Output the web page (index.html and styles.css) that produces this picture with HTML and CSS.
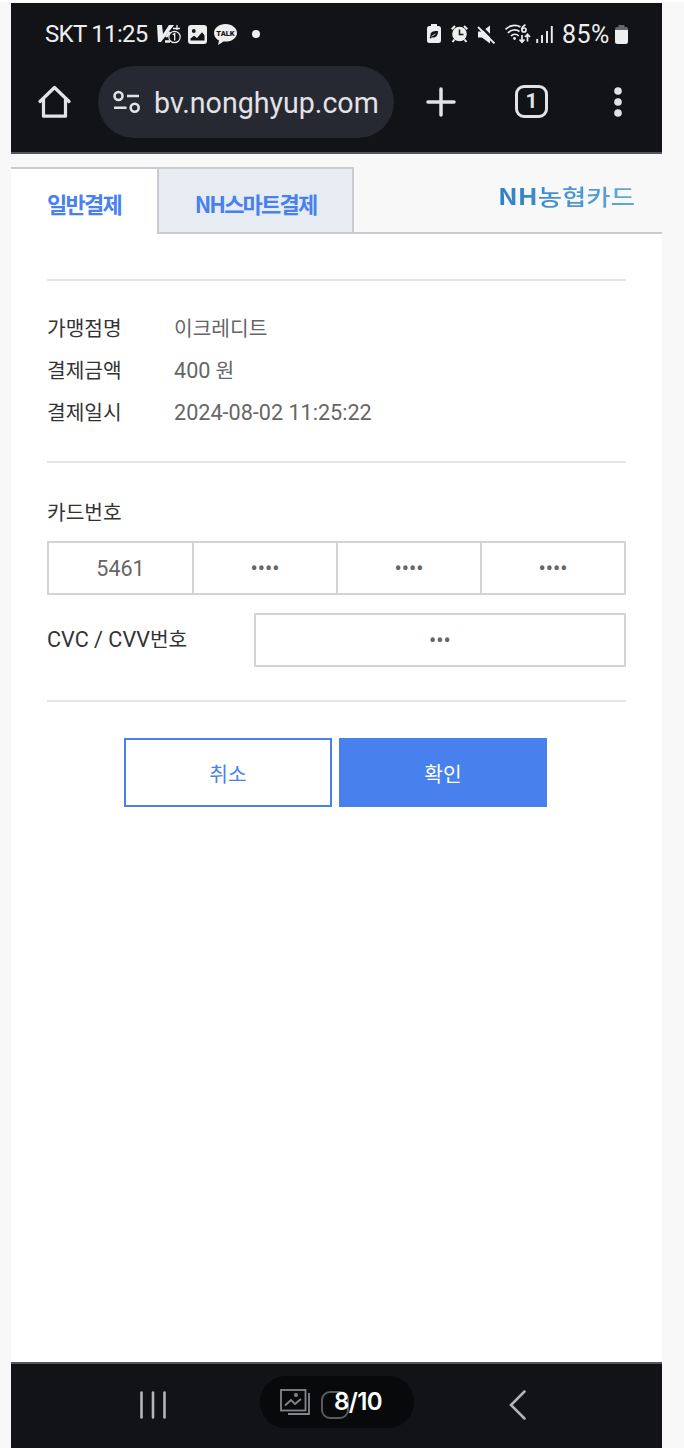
FILE: index.html
```html
<!DOCTYPE html>
<html lang="ko">
<head>
  <meta charset="UTF-8" />
  <meta name="viewport" content="width=device-width, initial-scale=1.0" />
  <title>NH농협카드 일반결제</title>
  <link rel="stylesheet" href="styles.css">
</head>
<body>
  <div class="phone">
    <!-- 상태바 -->
    <div class="status-bar">
      <span class="carrier">SKT 11:25</span>
      <svg class="ic-vaccine" width="25" height="20" viewBox="0 0 25 20">
        <path d="M0 1h5l1 9 6-9h5L4 18H1z" fill="#eee"/>
        <path d="M9 13l4-5M8 17.500h5" stroke="#eee" stroke-width="2.500"/>
        <path d="M16 4.500h7M20 1v5" stroke="#eee" stroke-width="1.300"/>
        <circle cx="17.500" cy="13" r="5.700" fill="#121317" stroke="#eee" stroke-width="1.200"/>
        <path d="M15.700 10.700l2-1.200v7" fill="none" stroke="#eee" stroke-width="1.300"/>
      </svg>
      <svg class="ic-photo" width="19" height="19" viewBox="0 0 19 19">
        <rect width="19" height="19" rx="3" fill="#eee"/>
        <circle cx="5.800" cy="6" r="1.900" fill="#121317"/>
        <path d="M2.500 15.500v-2l3.500-2.800 3 2.200 5-5.700 2.500 3v5.300z" fill="#121317"/>
      </svg>
      <svg class="ic-talk" width="23" height="21" viewBox="0 0 23 21">
        <path d="M11.500 0C5 0 0 4 0 9c0 3.200 2 6 5 7.500L4 21l5.500-3.500 2 .1C18 17.600 23 13.800 23 9s-5-9-11.500-9z" fill="#eee"/>
        <text class="talk-text" x="11.500" y="12" text-anchor="middle">TALK</text>
      </svg>
      <span class="more-dot"></span>

      <svg class="ic-saver" width="14" height="20" viewBox="0 0 14 20">
        <path d="M4 0h6v2h1.500A2.500 2.500 0 0 1 14 4.500v12a2.500 2.500 0 0 1-2.500 2.500h-9A2.500 2.500 0 0 1 0 16.500v-12A2.500 2.500 0 0 1 2.500 2H4z" fill="#eee"/>
        <path d="M11 7c-5-.2-7.500 1-7.500 4l-.8 3.200 1.500.3.400-1.200c4 .8 6.400-1 6.400-6.300z" fill="#121317"/>
        <path d="M4.500 12.300L8.500 10" stroke="#eee" stroke-width=".8"/>
      </svg>
      <svg class="ic-alarm" width="17" height="18" viewBox="0 0 17 18">
        <circle cx="8.500" cy="9" r="7.300" fill="#eee"/>
        <path d="M.7 4.200L4 1M16.300 4.200L13 1M3.500 14.500l-2 2.500M13.500 14.500l2 2.500" stroke="#eee" stroke-width="2"/>
        <path d="M8.500 4.500v5H12.500" fill="none" stroke="#121317" stroke-width="1.500"/>
      </svg>
      <svg class="ic-mute" width="19" height="19" viewBox="0 0 19 19">
        <path d="M1 6.500h4l8-6v18l-8-6H1z" fill="#eee"/>
        <path d="M2.500 0L19 16.500" stroke="#121317" stroke-width="2.500"/>
        <path d="M1 2L17.500 18.500" stroke="#eee" stroke-width="1.800"/>
      </svg>
      <svg class="ic-wifi" width="26" height="20" viewBox="0 0 26 20">
        <g fill="none" stroke="#eee" stroke-width="1.700">
          <path d="M.5 5.500C4.500 1 11 .3 15.500 3"/>
          <path d="M3 9C6 5.500 11 5 14.500 7.500"/>
          <path d="M6 12c2-2.300 5.500-2.300 7.700-.2"/>
          <path d="M20.500.8c-2.800 1.500-3.800 3.500-3.600 5.300"/>
          <circle cx="19" cy="6" r="2"/>
          <path d="M17 11v7M14.500 15.500L17 18.200l2.500-2.700M22.500 17.500v-7M20 13l2.500-2.700L25 13"/>
        </g>
        <circle cx="9.500" cy="14.500" r="1.400" fill="#eee"/>
      </svg>
      <svg class="ic-signal" width="17" height="18" viewBox="0 0 17 18">
        <path d="M1.200 14v4M6 10v8M11 6v12M15.800 1v17" stroke="#eee" stroke-width="1.900"/>
      </svg>
      <span class="percent">85%</span>
      <svg class="ic-battery" width="13" height="19" viewBox="0 0 13 19">
        <path d="M3.500 0h6v2H11a2 2 0 0 1 2 2v2H0V4a2 2 0 0 1 2-2h1.500z" fill="#66676a"/>
        <path d="M0 5h13v11.500a2.500 2.500 0 0 1-2.500 2.500h-8A2.500 2.500 0 0 1 0 16.500z" fill="#eee"/>
      </svg>
    </div>

    <!-- 브라우저 주소창 -->
    <div class="toolbar">
      <svg class="ic-home" width="33" height="34" viewBox="0 0 33 34">
        <path d="M2 16.500L16.500 2.500 31 16.500M5.500 14v17.200h22V14" fill="none" stroke="#e3e2e6" stroke-width="3.200" stroke-linejoin="round" stroke-linecap="round"/>
      </svg>
      <div class="address">
        <svg width="28" height="24" viewBox="0 0 28 24">
          <g fill="none" stroke="#e3e2e6" stroke-width="2.600">
            <circle cx="5.500" cy="6" r="4"/>
            <circle cx="21.700" cy="17.700" r="4"/>
            <path d="M14 6h12M1 17.700h12.500"/>
          </g>
        </svg>
        <span class="url">bv.nonghyup.com</span>
      </div>
      <svg class="ic-plus" width="30" height="30" viewBox="0 0 30 30">
        <path d="M15 2v26M2 15h26" stroke="#e3e2e6" stroke-width="3.500" stroke-linecap="round"/>
      </svg>
      <span class="tab-count">1</span>
      <svg class="ic-menu" width="8" height="30" viewBox="0 0 8 30">
        <g fill="#e3e2e6">
          <circle cx="4" cy="4" r="3.800"/>
          <circle cx="4" cy="15" r="3.800"/>
          <circle cx="4" cy="26" r="3.800"/>
        </g>
      </svg>
    </div>

    <!-- 결제 탭 -->
    <div class="tabs">
      <div class="tab active"><span>일반결제</span></div>
      <div class="tab"><span>NH스마트결제</span></div>
      <div class="brand"><span class="brand-name"><b>NH</b>농협카드</span></div>
    </div>

    <div class="content">
      <dl class="info">
        <dt>가맹점명</dt><dd>이크레디트</dd>
        <dt>결제금액</dt><dd><span class="num">400</span> 원</dd>
        <dt>결제일시</dt><dd class="num">2024-08-02 11:25:22</dd>
      </dl>

      <div class="card">
        <div class="label">카드번호</div>
        <div class="card-number">
          <span>5461</span>
          <span>••••</span>
          <span>••••</span>
          <span>••••</span>
        </div>
        <div class="cvc">
          <div class="label"><span class="num">CVC / CVV</span>번호</div>
          <div class="cvc-input">•••</div>
        </div>
      </div>

      <div class="button-group">
        <button class="cancel">취소</button>
        <button class="confirm">확인</button>
      </div>
    </div>

    <!-- 하단 내비게이션 -->
    <div class="nav-bar">
      <svg class="ic-recent" width="26" height="28" viewBox="0 0 26 28">
        <path d="M1.500 1.500v25M13 1.500v25M24.500 1.500v25" stroke="#b5b5b8" stroke-width="2.600" stroke-linecap="round"/>
      </svg>
      <div class="counter">
        <svg class="ic-gallery" width="30" height="26" viewBox="0 0 30 26">
          <g fill="none" stroke="#85868a" stroke-width="1.800">
            <rect x="1" y="1" width="24.500" height="20.500"/>
            <path d="M29 4v21H8M5 16.500l6-5.500 4 4 6-5"/>
          </g>
          <circle cx="16" cy="6" r="2" fill="#85868a"/>
        </svg>
        <span class="home-key"></span>
        <span class="pages">8/10</span>
      </div>
      <svg class="ic-back" width="17" height="30" viewBox="0 0 17 30">
        <path d="M15.500 1.500L2 15l13.500 13.500" fill="none" stroke="#b5b5b8" stroke-width="2.500" stroke-linecap="round"/>
      </svg>
    </div>
  </div>
</body>
</html>
```
FILE: styles.css
```css
* {
  box-sizing: border-box;
}

body {
  margin: 0;
  padding: 1px 22px 0 11px;
  height: 1448px;
  background: #f8f8f8;
  border-top: 2px solid #fff;
  font-family: Roboto, "Noto Sans CJK KR", sans-serif;
  overflow: hidden;
}

svg {
  display: block;
  flex: none;
}

.phone {
  width: 651px;
  height: 1445px;
  display: flex;
  flex-direction: column;
  background: #fff;
}

/* 상태바 */
.status-bar {
  height: 62px;
  padding-left: 34px;
  display: flex;
  align-items: center;
  background: #121317;
  color: #eee;
  font-size: 24px;
  white-space: nowrap;
}

.carrier {
  width: 112px;
  letter-spacing: -0.7px;
}

.ic-photo {
  margin-left: 6px;
}

.ic-talk {
  margin-left: 7px;
}

.talk-text {
  font: 900 7.5px Roboto, sans-serif;
  fill: #121317;
}

.more-dot {
  width: 8px;
  height: 8px;
  margin: 0 167px 0 15px;
  border-radius: 50%;
  background: #eee;
}

.ic-alarm {
  margin-left: 10px;
}

.ic-mute,
.ic-wifi {
  margin-left: 9px;
}

.ic-signal {
  margin-left: 5px;
}

.percent {
  width: 53px;
  margin-left: 9px;
  font-size: 25px;
  letter-spacing: 0.5px;
}

/* 주소창 */
.toolbar {
  height: 89px;
  padding: 0 0 14px 27px;
  display: flex;
  align-items: center;
  background: #121317;
  border-bottom: 2px solid #55565b;
  color: #e3e2e6;
}

.address {
  width: 296px;
  height: 72px;
  margin-left: 27px;
  padding-left: 15px;
  display: flex;
  align-items: center;
  border-radius: 36px;
  background: #262931;
}

.url {
  margin: 2px 0 0 13px;
  font-size: 28.6px;
}

.ic-plus {
  margin-left: 32px;
}

.tab-count {
  width: 33px;
  height: 33px;
  margin-left: 59px;
  border: 3.500px solid #e3e2e6;
  border-radius: 9px;
  font-size: 21px;
  font-weight: 700;
  line-height: 27px;
  text-align: center;
}

.ic-menu {
  margin-left: 66px;
}

/* 결제 탭 */
.tabs {
  height: 80px;
  display: flex;
  background: #f8f8f8;
}

.tab {
  width: 197px;
  margin-top: 13px;
  padding-top: 4px;
  display: flex;
  align-items: center;
  justify-content: center;
  border: 2px solid #c9cbd1;
  background: #e7ecf2;
  color: #4881ee;
  font-family: "Noto Sans CJK KR", sans-serif;
  font-size: 22px;
  font-weight: 700;
  letter-spacing: -1.8px;
}

.tab.active {
  width: 146px;
  padding-top: 2px;
  border-width: 2px 0 0;
  background: #fff;
}

.brand {
  flex: 1;
  padding: 25px 0 0 144px;
  border-bottom: 2px solid #c9cbd1;
}

.brand-name {
  display: inline-block;
  font: 500 22px/32px "Noto Sans CJK KR", sans-serif;
  color: transparent;
  background: linear-gradient(90deg, #2f7fc7, #62a8d8);
  background-clip: text;
  transform: scaleX(1.2);
  transform-origin: left;
  white-space: nowrap;
}

/* 결제 정보 */
.content {
  flex: 1;
  padding: 45px 36px 0;
  color: #333;
  font-size: 20.3px;
}

.info {
  height: 184px;
  margin: 0;
  padding-top: 27px;
  display: grid;
  grid-template-columns: 127px 1fr;
  grid-auto-rows: 42px;
  line-height: 42px;
  border-top: 2px solid #e5e5e5;
  border-bottom: 2px solid #e5e5e5;
}

.info dd {
  margin: 0;
  color: #666;
}

.num {
  font-size: 21.600px;
}

.card {
  height: 239px;
  padding-top: 29px;
  border-bottom: 2px solid #e5e5e5;
}

.label {
  height: 42px;
  line-height: 42px;
}

.card-number {
  height: 54px;
  margin-top: 7px;
  display: grid;
  grid-template-columns: 143px 144px 144px 1fr;
  border: 2px solid #d4d4d4;
  color: #666;
  font-size: 21.500px;
  line-height: 51px;
  text-align: center;
}

.card-number span + span {
  border-left: 2px solid #d4d4d4;
}

.cvc {
  height: 54px;
  margin-top: 18px;
  display: flex;
  justify-content: space-between;
}

.cvc .label {
  padding-top: 6px;
}

.cvc-input {
  width: 372px;
  border: 2px solid #d4d4d4;
  color: #666;
  font-size: 21.500px;
  line-height: 51px;
  text-align: center;
}

.button-group {
  display: flex;
  gap: 7px;
  margin: 36px 0 0 77px;
}

button {
  width: 208px;
  height: 69px;
  padding: 0;
  border: 2px solid #4881ee;
  font: 400 20.3px "Noto Sans CJK KR", sans-serif;
}

.cancel {
  background: #fff;
  color: #4881ee;
}

.confirm {
  background: #4881ee;
  color: #fff;
}

/* 하단 내비게이션 */
.nav-bar {
  height: 86px;
  padding: 0 0 2px 129px;
  display: flex;
  align-items: center;
  background: #121317;
  border-top: 2px solid #55555d;
}

.counter {
  width: 154px;
  height: 52px;
  margin: 0 95px 6px 94px;
  padding-left: 20px;
  display: flex;
  align-items: center;
  border-radius: 26px;
  background: #08090b;
}

.home-key {
  width: 28px;
  height: 28px;
  margin: 6px 0 0 11px;
  border: 2px solid #5a5b5e;
  border-radius: 9px;
}

.pages {
  margin: -2px 0 0 -15px;
  position: relative;
  color: #fff;
  font: 600 24px Inter, sans-serif;
  letter-spacing: -0.6px;
}
```
